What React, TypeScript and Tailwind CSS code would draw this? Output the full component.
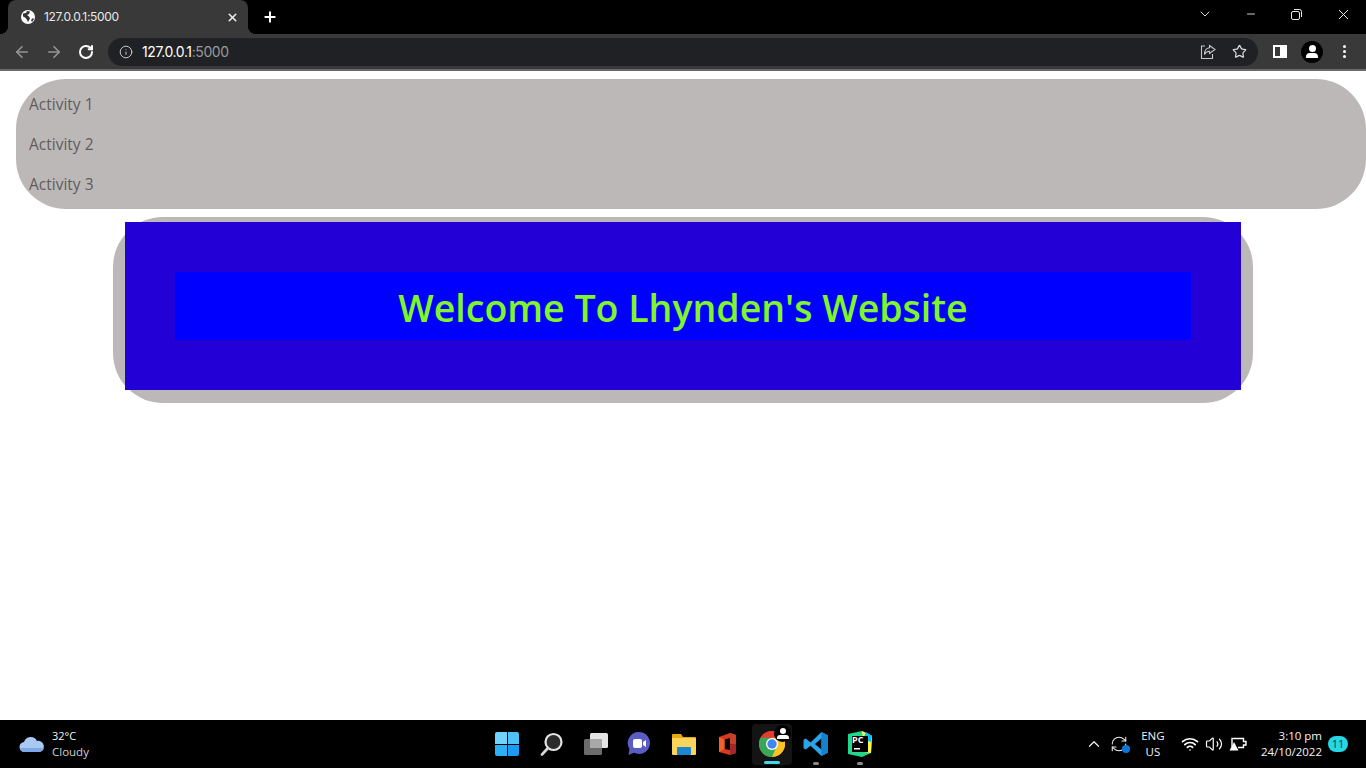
import { ArrowLeft, ArrowRight, ChevronDown, ChevronUp, Info, Minus, Plus, RefreshCw, RotateCw, Star, Volume2, Wifi, X } from "lucide-react";

const activities = ["Activity 1", "Activity 2", "Activity 3"];

function Globe() {
  return (
    <svg width="14" height="14" viewBox="0 0 14 14">
      <circle cx="7" cy="7" r="7" fill="#fff" />
      <path d="M2 3.500 5 3l1-2 3 .5-1 2.500-2 1 2 1.500 1 2-2 3.500-1.500-3-1.500-1.500-2-1z" fill="#333" />
      <path d="M10 10l2-2 1 1-2 3z" fill="#333" />
    </svg>
  );
}

function ChromeBar() {
  return (
    <div className="h-[71px] shrink-0 flex flex-col font-['Inter',sans-serif]">
      <div className="h-[34px] bg-black flex items-end pl-2 relative">
        <div className="relative w-[240px] h-[34px] bg-[#393939] rounded-t-lg flex items-center pl-[13px] pr-[9px] text-white">
          <div className="absolute left-[-8px] bottom-0 w-2 h-2 bg-[radial-gradient(circle_at_0_0,#000_8px,#393939_8px)]" />
          <div className="absolute right-[-8px] bottom-0 w-2 h-2 bg-[radial-gradient(circle_at_100%_0,#000_8px,#393939_8px)]" />
          <Globe />
          <span className="ml-[9px] text-[12px] flex-1 tracking-[-0.3px] text-[#e8e8e8]">127.0.0.1:5000</span>
          <X size={13} strokeWidth={3} className="text-[#e8e8e8]" />
        </div>
        <Plus size={16} strokeWidth={3} className="text-white ml-[14px] mb-[9px]" />
        <div className="flex-1 flex items-center justify-end self-start h-[28px] text-[#e8e8e8]">
          <ChevronDown size={16} strokeWidth={1.400} className="mr-[32px]" />
          <Minus size={12} strokeWidth={1.800} className="mr-[34px]" />
          <svg width="11" height="11" viewBox="0 0 11 11" fill="none" stroke="currentColor" className="mr-[33px]">
            <rect x="0.500" y="2.500" width="8" height="8" rx="1.500" />
            <path d="M3 .5h5.500a2 2 0 0 1 2 2V8" />
          </svg>
          <X size={17} strokeWidth={1.400} className="mr-[14px]" />
        </div>
      </div>
      <div className="h-[35px] bg-[#393939] flex items-center pl-[13px]">
        <ArrowLeft size={18} strokeWidth={2.200} className="text-[#959595]" />
        <ArrowRight size={18} strokeWidth={2.200} className="text-[#959595] ml-[14px]" />
        <RotateCw size={16} strokeWidth={3} className="text-white ml-[15px]" />
        <div className="ml-[14px] w-[1150px] h-[28px] rounded-full bg-[#202124] flex items-center pl-[11px] pr-[11px]">
          <Info size={14} strokeWidth={1.600} className="text-[#d0d0d0]" />
          <span className="ml-[9px] flex-1 text-[14px] tracking-[-0.4px] text-white">
            127.0.0.1<span className="text-[#9a9a9a]">:5000</span>
          </span>
          <svg width="16" height="16" viewBox="0 0 16 16" fill="none" stroke="#c8c8c8" strokeWidth="1.100" className="mr-[16px]">
            <path d="M5 2H1.500v12.500h11V10" />
            <path d="M9.500 1.500l5.500 4-5.500 4V7.300C7 7.300 5.500 8.500 4.500 10.500 4.500 7 6.500 4.200 9.500 3.800z" />
          </svg>
          <Star size={15} strokeWidth={2} className="text-[#d8d8d8]" />
        </div>
        <div className="ml-[15px] w-[14px] h-[13px] border-[2px] border-white flex justify-end">
          <div className="w-[5px] bg-white" />
        </div>
        <div className="ml-[14px] w-[22px] h-[22px] rounded-full bg-black flex flex-col items-center justify-center">
          <div className="w-[7px] h-[7px] rounded-full bg-white" />
          <div className="w-[12px] h-[5px] rounded-t-[4px] bg-white mt-[1px]" />
        </div>
        <div className="ml-[20px] flex flex-col gap-[2px]">
          <div className="w-[3px] h-[3px] rounded-full bg-white" />
          <div className="w-[3px] h-[3px] rounded-full bg-white" />
          <div className="w-[3px] h-[3px] rounded-full bg-white" />
        </div>
      </div>
      <div className="h-[2px] bg-[#6a6a6a]" />
    </div>
  );
}

function TaskIcons() {
  return (
    <div className="flex items-center h-[48px] absolute left-[495px] top-0">
      {/* windows */}
      <div className="grid grid-cols-2 gap-[1px] w-[24px] h-[24px]">
        <div className="bg-[#6fd3fb] rounded-tl-[2px]" />
        <div className="bg-[#4cc2f9] rounded-tr-[2px]" />
        <div className="bg-[#2bb0f6] rounded-bl-[2px]" />
        <div className="bg-[#1a9cf2] rounded-br-[2px]" />
      </div>
      {/* search */}
      <svg width="24" height="24" viewBox="0 0 24 24" className="ml-[21px]">
        <circle cx="13.500" cy="10" r="8" fill="#2b2b2b" stroke="#e6e6e6" strokeWidth="2.200" />
        <path d="M8 16 2 22.500" stroke="#d8d8d8" strokeWidth="2.600" strokeLinecap="round" />
      </svg>
      {/* task view */}
      <svg width="26" height="24" viewBox="0 0 26 24" className="ml-[19px]">
        <rect x="7" y="1" width="18" height="15" rx="1.500" fill="#e4e4e4" />
        <rect x="1" y="7" width="18" height="16" rx="1.500" fill="#6b6b6b" />
        <rect x="7" y="7" width="12" height="9" fill="#a8a8a8" />
      </svg>
      {/* teams chat */}
      <svg width="24" height="26" viewBox="0 0 24 26" className="ml-[18px]">
        <path d="M12 1a11 11 0 1 1-5 20.800L1.500 24l1-6A11 11 0 0 1 12 1z" fill="#5b5bc4" />
        <rect x="6" y="8" width="9" height="9" rx="2" fill="#fff" />
        <path d="M16 11l3-2v7l-3-2z" fill="#fff" />
      </svg>
      {/* folder */}
      <svg width="24" height="22" viewBox="0 0 24 22" className="ml-[21px]">
        <path d="M0 2a1 1 0 0 1 1-1h8l2 3h12a1 1 0 0 1 1 1v3H0z" fill="#e8a90f" />
        <rect x="0" y="5" width="24" height="17" rx="1" fill="#fbd55b" />
        <rect x="5" y="14" width="14" height="8" rx="1" fill="#1d86d3" />
      </svg>
      {/* office */}
      <svg width="18" height="24" viewBox="0 0 18 24" className="ml-[23px]">
        <path d="M0 5 11 1l6 2v18l-6 2-11-3z" fill="#d8391c" />
        <path d="M5.500 7.500 11 6v12l-5.500-1z" fill="#000" />
        <path d="M11 1l6 2v9h-6z" fill="#c8402a" />
        <path d="M11 12h6v9l-6 2z" fill="#a4262c" />
        <path d="M0 5l5.500 2.500V17L0 20z" fill="#f0622a" />
      </svg>
      {/* chrome, active */}
      <div className="ml-[15px] w-[40px] h-[41px] bg-[#141414] rounded-[4px] relative flex items-center justify-center">
        <svg width="26" height="26" viewBox="0 0 26 26">
          <circle cx="13" cy="13" r="13" fill="#e33b2e" />
          <path d="M13 26A13 13 0 0 0 24.300 6.500H13z" fill="#f7c325" />
          <path d="M13 26 18.500 13 13 6.500 1.700 6.500A13 13 0 0 0 13 26z" fill="#3aa757" />
          <path d="M1.700 6.500A13 13 0 0 1 24.300 6.500H13z" fill="#e33b2e" />
          <circle cx="13" cy="13" r="6" fill="#fff" />
          <circle cx="13" cy="13" r="4.700" fill="#3f87ef" />
        </svg>
        <div className="absolute right-[1px] top-[1px] w-[17px] h-[17px] rounded-full bg-black flex flex-col items-center justify-center">
          <div className="w-[6px] h-[6px] rounded-full bg-white" />
          <div className="w-[12px] h-[4px] rounded-t-[3px] bg-white mt-[1px]" />
        </div>
        <div className="absolute bottom-[1px] left-[12px] w-[16px] h-[3px] rounded-full bg-[#3ed8e8]" />
      </div>
      {/* vscode */}
      <div className="relative ml-[4px] h-[48px] w-[40px] flex items-center justify-center">
        <svg width="26" height="26" viewBox="0 0 24 24">
          <path d="M17 1l6 3v16l-6 3L7 13.500 2.500 17 .5 16v-8l2-1L7 10.500z" fill="#2aa3e8" />
          <path d="M17 7v10l-6-5z" fill="#000" />
          <path d="M17 1l6 3v16l-6 3z" fill="#1581cc" />
        </svg>
        <div className="absolute bottom-[3px] left-[17px] w-[6px] h-[3px] rounded-full bg-[#8a8a8a]" />
      </div>
      {/* pycharm */}
      <div className="relative ml-[4px] h-[48px] w-[40px] flex items-center justify-center">
        <svg width="26" height="26" viewBox="0 0 26 26">
          <path d="M1 3 15 0l10 5-1 17-9 4-14-3z" fill="#21d789" />
          <path d="M15 0l10 5-1 17-7-1z" fill="#fcf84a" />
          <path d="M25 5l-6-4-3 7 8 3z" fill="#07c3f2" />
          <rect x="5" y="5" width="16" height="16" fill="#000" />
          <rect x="7" y="17" width="6" height="1.500" fill="#fff" />
        </svg>
        <span className="absolute left-[12px] top-[15px] text-[9px] leading-[10px] font-bold text-white">PC</span>
        <div className="absolute bottom-[3px] left-[17px] w-[6px] h-[3px] rounded-full bg-[#8a8a8a]" />
      </div>
    </div>
  );
}

function Taskbar() {
  return (
    <div className="h-[48px] shrink-0 bg-black relative flex items-center text-white font-['Open_Sans',sans-serif] text-[12px] leading-[16px]">
      <div className="flex items-center ml-[19px]">
        <svg width="26" height="18" viewBox="0 0 26 18">
          <path d="M6 17a5 5 0 0 1-1-10 7 7 0 0 1 13-1 5.500 5.500 0 0 1 2.500 11z" fill="#a9c8f2" />
          <path d="M6 17a5 5 0 0 1-5-4h24a5.500 5.500 0 0 1-4.500 4z" fill="#7fa9e6" />
        </svg>
        <div className="ml-[7px]">
          <div className="text-[#f4f4f4] text-[11px]">32°C</div>
          <div className="text-[#d0d0d0] text-[11.500px]">Cloudy</div>
        </div>
      </div>
      <TaskIcons />
      <div className="ml-auto flex items-center">
        <ChevronUp size={18} strokeWidth={1.600} className="text-[#f0f0f0]" />
        <div className="relative ml-[7px] w-[18px] h-[18px]">
          <RefreshCw size={18} strokeWidth={1.400} className="text-[#f0f0f0]" />
          <div className="absolute right-[-2px] bottom-[0px] w-[8px] h-[8px] rounded-full bg-[#0a78d8]" />
        </div>
        <div className="ml-[12px] w-[26px] text-center text-[11.500px] leading-[16px] text-[#f0f0f0]">
          <div>ENG</div>
          <div>US</div>
        </div>
        <Wifi size={18} strokeWidth={2.200} className="ml-[15px] text-white" />
        <Volume2 size={18} strokeWidth={1.600} className="ml-[6px] text-white" />
        <svg width="18" height="14" viewBox="0 0 18 14" fill="none" stroke="#fff" strokeWidth="1.400" className="ml-[6px]">
          <path d="M3 10V1.500h11.500V4.500H17V8H14.500V10.500H9" />
          <path d="M5 5 .5 13.500h9z" fill="#fff" stroke="none" />
        </svg>
        <div className="ml-[14px] text-right text-[11.500px] leading-[16px] text-[#f4f4f4]">
          <div>3:10 pm</div>
          <div>24/10/2022</div>
        </div>
        <div className="ml-[6px] mr-[18px] w-[20px] h-[16px] rounded-full bg-[#25d6e6] text-[#0b3a40] text-[11px] leading-[16px] text-center">
          11
        </div>
      </div>
    </div>
  );
}

export default function App() {
  return (
    <div className="h-[768px] w-[1366px] flex flex-col overflow-hidden bg-white">
      <ChromeBar />
      <main className="flex-1 pt-2 font-['Open_Sans',sans-serif]">
        <ul className="ml-4 h-[130px] rounded-[50px] bg-[#bdb8b8] pl-[13px] pt-[5px] text-[15.500px] text-[#5f5c5c]">
          {activities.map((a) => (
            <li key={a} className="h-10 leading-10">
              {a}
            </li>
          ))}
        </ul>
        <section className="mx-auto mt-2 w-[1140px] h-[186px] rounded-[50px] bg-[#bdb8b8] pt-[5px] pl-3">
          <div className="w-[1116px] h-[168px] bg-[#2200d6] p-[50px]">
            <h1 className="h-[68px] bg-[#0000ff] text-center text-[37.500px] leading-[72px] font-semibold text-[#80f52a]">
              Welcome To Lhynden's Website
            </h1>
          </div>
        </section>
      </main>
      <Taskbar />
    </div>
  );
}
